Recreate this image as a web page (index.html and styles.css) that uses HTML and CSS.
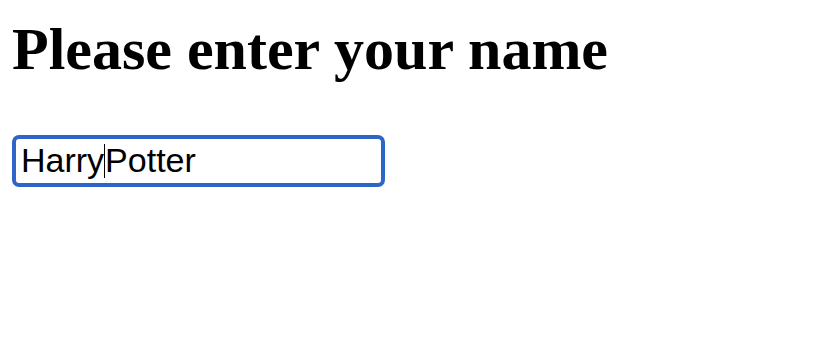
FILE: index.html
```html
<!DOCTYPE html>
<html lang="en">
<head>
<meta charset="utf-8">
<title>Please enter your name</title>
<link rel="stylesheet" href="styles.css">
</head>
<body>
<main class="page">
  <h1 class="title">Please enter your name</h1>
  <div class="field" role="textbox" aria-label="Name"><span>Harry</span><span class="caret"></span><span>Potter</span></div>
</main>
</body>
</html>
```

FILE: styles.css
```css
html, body {
  margin: 0;
  padding: 0;
  background: #ffffff;
}

.page {
  padding: 16px 0 0 12px;
  display: flex;
  flex-direction: column;
  align-items: flex-start;
}

.title {
  margin: 0;
  font-family: "Liberation Serif", "Times New Roman", serif;
  font-weight: bold;
  font-size: 60px;
  line-height: 66px;
  color: #000000;
}

.field {
  margin-top: 53px;
  box-sizing: border-box;
  width: 373px;
  height: 52px;
  border: 4px solid #2e65c8;
  border-radius: 7px;
  padding: 0 4px 3px 5px;
  display: flex;
  align-items: center;
  font-family: "Liberation Sans", Arial, sans-serif;
  font-size: 34px;
  line-height: 40px;
  color: #000000;
  white-space: pre;
}

.caret {
  display: inline-block;
  width: 1px;
  height: 34px;
  background: #000000;
  margin-top: 2px;
}
```
